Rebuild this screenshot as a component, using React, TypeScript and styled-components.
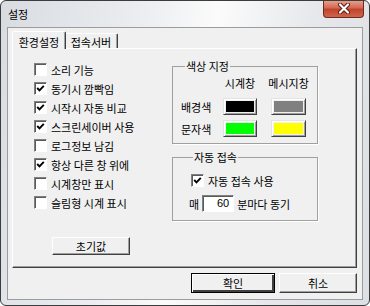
import React from 'react'
import styled, { createGlobalStyle } from 'styled-components'

const GlobalStyle = createGlobalStyle`
    html, body {
        margin: 0;
        padding: 0;
        background: #ffffff;
    }
    body {
        font-family: "Noto Sans CJK KR", "Noto Sans", sans-serif;
        font-size: 11px;
        color: #000;
    }
`

const Window = styled.div`
    width: 370px;
    height: 306px;
    box-sizing: border-box;
    border: 1px solid #3c3c3c;
    border-radius: 6px;
    overflow: hidden;
    display: flex;
    flex-direction: column;
    background: linear-gradient(100deg, #d8dce1 0%, #eceef1 35%, #fbfbfb 52%, #e6e8eb 75%, #dcdfe3 100%);
`

const TitleBar = styled.div`
    height: 26px;
    flex: none;
    display: flex;
    justify-content: space-between;
    align-items: flex-start;
    padding: 0 5px 0 7px;
`

const Title = styled.span`
    line-height: 27px;
    font-size: 11px;
`

const CloseButton = styled.div`
    width: 41px;
    height: 18px;
    margin-top: -1px;
    box-sizing: border-box;
    border: 1px solid #6e2a20;
    border-top: none;
    border-radius: 0 0 4px 4px;
    background: linear-gradient(180deg, #e8a593 0%, #d46a55 45%, #c0432c 55%, #d0654c 100%);
    display: flex;
    align-items: center;
    justify-content: center;
`

const Client = styled.div`
    flex: 1;
    margin: 0 6px 5px 6px;
    border: 1px solid #9c9c9c;
    background: #f0f0f0;
    padding: 3px 5px 0 4px;
    display: flex;
    flex-direction: column;
`

const TabStrip = styled.div`
    height: 17px;
    display: flex;
    align-items: flex-end;
    padding-left: 2px;
`

const Tab = styled.div<{ $active?: boolean }>`
    position: relative;
    z-index: ${p => (p.$active ? 1 : 0)};
    width: 54px;
    height: ${p => (p.$active ? 18 : 15)}px;
    margin: ${p => (p.$active ? '0 -2px -1px -2px' : '0')};
    box-sizing: border-box;
    padding-top: ${p => (p.$active ? 3 : 1)}px;
    border: 1px solid;
    border-bottom: none;
    border-color: #ffffff #404040 transparent #ffffff;
    border-radius: 2px 2px 0 0;
    box-shadow: inset -1px 0 0 #a0a0a0;
    background: #f0f0f0;
    text-align: center;
    line-height: 14px;
`

const TabPage = styled.div`
    height: 220px;
    box-sizing: border-box;
    border: 1px solid;
    border-color: #ffffff #404040 #404040 #ffffff;
    box-shadow: inset -1px -1px 0 #a0a0a0;
    display: flex;
`

const LeftColumn = styled.div`
    width: 159px;
    box-sizing: border-box;
    padding: 11px 0 0 21px;
    display: flex;
    flex-direction: column;
    align-items: flex-start;
`

const OptionRow = styled.label`
    height: 19px;
    display: flex;
    align-items: center;
    gap: 4px;
    white-space: nowrap;
`

const Box = styled.span`
    width: 13px;
    height: 13px;
    box-sizing: border-box;
    border: 1px solid;
    border-color: #808080 #ffffff #ffffff #808080;
    box-shadow: inset 1px 1px 0 #5a5a5a;
    background: #ffffff;
    display: flex;
    align-items: center;
    justify-content: center;
    flex: none;
`

const Button = styled.div<{ $width: number; $height?: number; $default?: boolean }>`
    width: ${p => p.$width}px;
    height: ${p => p.$height ?? 20}px;
    box-sizing: border-box;
    border: 1px solid;
    border-color: ${p => (p.$default ? '#000000' : '#ffffff #404040 #404040 #ffffff')};
    box-shadow: ${p =>
        p.$default
            ? 'inset 1px 1px 0 #ffffff, inset -2px -2px 0 #404040, inset -1px -1px 0 #a0a0a0'
            : 'inset -1px -1px 0 #a0a0a0'};
    background: #f0f0f0;
    display: flex;
    align-items: center;
    justify-content: center;
    line-height: 14px;
`

const ResetButton = styled(Button)`
    margin: 25px 0 0 18px;
`

const RightColumn = styled.div`
    width: 146px;
    padding-top: 10px;
    display: flex;
    flex-direction: column;
`

const Group = styled.fieldset<{ $height: number; $pad: number }>`
    margin: 0;
    min-inline-size: 0;
    height: ${p => p.$height}px;
    box-sizing: border-box;
    padding: 0 0 0 ${p => p.$pad}px;
    border: 1px solid #a0a0a0;
    box-shadow: 1px 1px 0 #ffffff;
    & + & {
        margin-top: 6px;
    }
`

const Legend = styled.legend`
    padding: 0 1px;
    margin-left: 4px;
    line-height: 14px;
`

const ColorGrid = styled.div`
    margin-top: 2px;
    display: grid;
    grid-template-columns: 28px 34px 35px;
    grid-template-rows: 18px 17px 17px;
    column-gap: 14px;
    row-gap: 5px;
    align-items: center;
`

const ColHead = styled.span`
    justify-self: center;
    align-self: start;
    line-height: 16px;
    white-space: nowrap;
`

const RowHead = styled.span`
    line-height: 14px;
    white-space: nowrap;
`

const Swatch = styled.div<{ $color: string }>`
    height: 17px;
    box-sizing: border-box;
    border: 1px solid;
    border-color: #e3e3e3 #404040 #404040 #e3e3e3;
    box-shadow: inset 1px 1px 0 #ffffff, inset -1px -1px 0 #a0a0a0;
    padding: 2px;
    background: #f0f0f0;
    &::after {
        content: '';
        display: block;
        height: 100%;
        background: ${p => p.$color};
    }
`

const AutoRow = styled(OptionRow)`
    margin: 7px 0 0 2px;
`

const IntervalRow = styled.div`
    height: 19px;
    margin-top: 4px;
    display: flex;
    align-items: center;
    gap: 3px;
    white-space: nowrap;
`

const NumberBox = styled.div`
    width: 32px;
    height: 17px;
    box-sizing: border-box;
    border: 1px solid;
    border-color: #808080 #ffffff #ffffff #808080;
    box-shadow: inset 1px 1px 0 #5a5a5a;
    background: #ffffff;
    padding-right: 4px;
    text-align: right;
    font-family: "Liberation Sans", Arial, sans-serif;
    font-size: 11px;
    line-height: 14px;
`

const ButtonRow = styled.div`
    margin-top: 5px;
    display: flex;
    justify-content: flex-end;
    gap: 4px;
`

const CheckMark = () => (
    <svg width="9" height="9" viewBox="0 0 9 9">
        <polyline points="1.2,4 3.5,6.4 7.8,1.8" fill="none" stroke="#000" strokeWidth="1.9" />
    </svg>
)

const CloseGlyph = () => (
    <svg width="14" height="11" viewBox="0 0 14 11">
        <path d="M3 1.5 L11 9.5 M11 1.5 L3 9.5" stroke="#5a1a10" strokeWidth="4" strokeLinecap="round" />
        <path d="M3 1.5 L11 9.5 M11 1.5 L3 9.5" stroke="#ffffff" strokeWidth="2.2" strokeLinecap="round" />
    </svg>
)

const Check = ({ checked, label }: { checked?: boolean; label: string }) => (
    <>
        <Box>{checked && <CheckMark />}</Box>
        <span>{label}</span>
    </>
)

const OPTIONS = [
    { label: '소리 기능', checked: false },
    { label: '동기시 깜빡임', checked: true },
    { label: '시작시 자동 비교', checked: true },
    { label: '스크린세이버 사용', checked: true },
    { label: '로그정보 남김', checked: false },
    { label: '항상 다른 창 위에', checked: true },
    { label: '시계창만 표시', checked: false },
    { label: '슬림형 시계 표시', checked: false },
]

const App = () => (
    <>
        <GlobalStyle />
        <Window>
            <TitleBar>
                <Title>설정</Title>
                <CloseButton>
                    <CloseGlyph />
                </CloseButton>
            </TitleBar>
            <Client>
                <TabStrip>
                    <Tab $active>환경설정</Tab>
                    <Tab>접속서버</Tab>
                </TabStrip>
                <TabPage>
                    <LeftColumn>
                        {OPTIONS.map(o => (
                            <OptionRow key={o.label}>
                                <Check checked={o.checked} label={o.label} />
                            </OptionRow>
                        ))}
                        <ResetButton $width={78} $height={18}>
                            초기값
                        </ResetButton>
                    </LeftColumn>
                    <RightColumn>
                        <Group $height={85} $pad={8}>
                            <Legend>색상 지정</Legend>
                            <ColorGrid>
                                <span />
                                <ColHead>시계창</ColHead>
                                <ColHead>메시지창</ColHead>
                                <RowHead>배경색</RowHead>
                                <Swatch $color="#000000" />
                                <Swatch $color="#808080" />
                                <RowHead>문자색</RowHead>
                                <Swatch $color="#00ff00" />
                                <Swatch $color="#ffff00" />
                            </ColorGrid>
                        </Group>
                        <Group $height={71} $pad={16}>
                            <Legend>자동 접속</Legend>
                            <AutoRow>
                                <Check checked label="자동 접속 사용" />
                            </AutoRow>
                            <IntervalRow>
                                <span>매</span>
                                <NumberBox>60</NumberBox>
                                <span>분마다 동기</span>
                            </IntervalRow>
                        </Group>
                    </RightColumn>
                </TabPage>
                <ButtonRow>
                    <Button $width={84} $default>
                        확인
                    </Button>
                    <Button $width={78}>취소</Button>
                </ButtonRow>
            </Client>
        </Window>
    </>
)

export default App
